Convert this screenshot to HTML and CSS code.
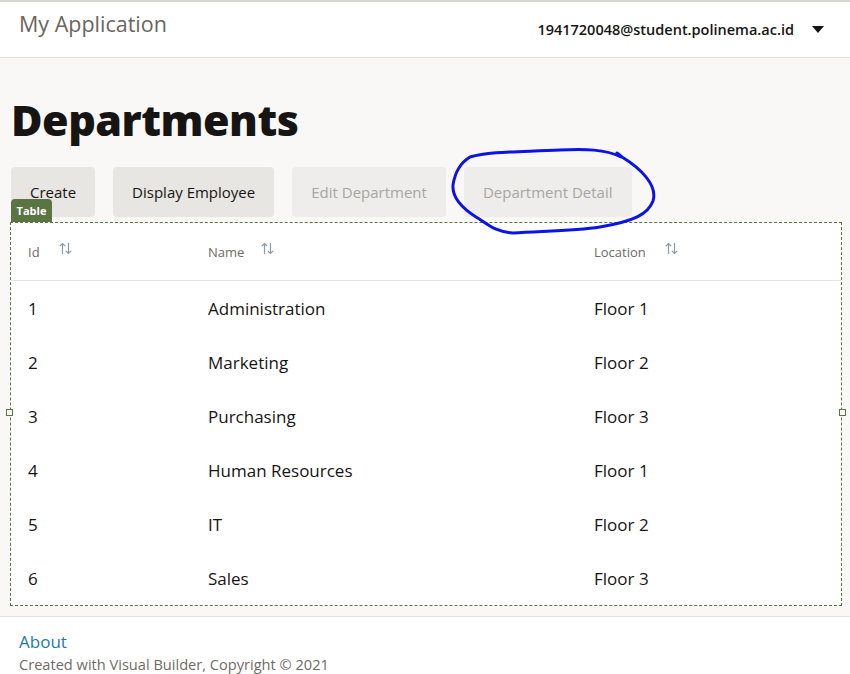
FILE: index.html
```html
<!DOCTYPE html>
<html>
<head>
<meta charset="utf-8">
<link rel="stylesheet" href="styles.css">
</head>
<body>
<header class="app-header">
  <div class="app-title">My Application</div>
  <div class="user-menu">
    <span class="user-email">1941720048@student.polinema.ac.id</span>
    <span class="caret"></span>
  </div>
</header>
<main class="page">
  <h1 class="page-title">Departments</h1>
  <div class="toolbar">
    <button class="btn">Create</button>
    <button class="btn">Display Employee</button>
    <button class="btn btn-disabled">Edit Department</button>
    <button class="btn btn-disabled">Department Detail</button>
  </div>
  <section class="table-wrap">
    <span class="table-tag">Table</span>
    <span class="handle handle-left"></span>
    <span class="handle handle-right"></span>
    <div class="row head">
      <div class="cell"><span>Id</span><svg class="sort" viewBox="0 0 13 13" width="13" height="13"><path d="M3.5 12V1.5M0.8 4.2L3.5 1.5L6.2 4.2M9.5 1V11.5M6.8 8.8L9.5 11.5L12.2 8.8" fill="none" stroke="#8e9aa6" stroke-width="1.2"/></svg></div>
      <div class="cell"><span>Name</span><svg class="sort" viewBox="0 0 13 13" width="13" height="13"><path d="M3.5 12V1.5M0.8 4.2L3.5 1.5L6.2 4.2M9.5 1V11.5M6.8 8.8L9.5 11.5L12.2 8.8" fill="none" stroke="#8e9aa6" stroke-width="1.2"/></svg></div>
      <div class="cell"><span>Location</span><svg class="sort" viewBox="0 0 13 13" width="13" height="13"><path d="M3.5 12V1.5M0.8 4.2L3.5 1.5L6.2 4.2M9.5 1V11.5M6.8 8.8L9.5 11.5L12.2 8.8" fill="none" stroke="#8e9aa6" stroke-width="1.2"/></svg></div>
    </div>
    <div class="row"><div class="cell">1</div><div class="cell">Administration</div><div class="cell">Floor 1</div></div>
    <div class="row"><div class="cell">2</div><div class="cell">Marketing</div><div class="cell">Floor 2</div></div>
    <div class="row"><div class="cell">3</div><div class="cell">Purchasing</div><div class="cell">Floor 3</div></div>
    <div class="row"><div class="cell">4</div><div class="cell">Human Resources</div><div class="cell">Floor 1</div></div>
    <div class="row"><div class="cell">5</div><div class="cell">IT</div><div class="cell">Floor 2</div></div>
    <div class="row"><div class="cell">6</div><div class="cell">Sales</div><div class="cell">Floor 3</div></div>
  </section>
</main>
<footer class="app-footer">
  <a class="about">About</a>
  <div class="copyright">Created with Visual Builder, Copyright © 2021</div>
</footer>
<svg class="annotation" width="850" height="674" viewBox="0 0 850 674">
  <path d="M617 153 L622 157 C640 168, 658 185, 653 201 C648 214, 635 221, 600 227 C575 231, 545 231, 513 233 C495 232, 488 224, 476 217 C462 208, 452 197, 453 185 C455 172, 460 163, 470 157 C490 151, 520 152, 560 150 C585 149, 605 149, 621 157" fill="none" stroke="#0a14e6" stroke-width="3" stroke-linecap="round" stroke-linejoin="round"/>
</svg>
</body>
</html>
```
FILE: styles.css
```css
html, body {
  margin: 0;
  padding: 0;
}
body {
  font-family: "Open Sans", "Noto Sans", sans-serif;
  color: #161513;
  background: #fff;
  width: 850px;
  height: 674px;
  overflow: hidden;
  position: relative;
}
.app-header {
  border-top: 2px solid #d9d5d1;
  border-bottom: 1px solid #e4e2df;
  height: 55px;
  box-sizing: content-box;
  display: flex;
  align-items: center;
  justify-content: space-between;
  padding: 0 26px 0 19px;
  background: #fff;
}
.app-title {
  font-size: 21.5px;
  color: #6b6560;
  margin-top: -12px;
}
.user-menu {
  display: flex;
  align-items: center;
  gap: 18px;
}
.user-email {
  font-size: 14.5px;
  font-weight: 600;
  color: #161513;
}
.caret {
  width: 0;
  height: 0;
  border-left: 6px solid transparent;
  border-right: 6px solid transparent;
  border-top: 7px solid #161513;
}
.page {
  background: #f9f8f6;
  padding: 1px 8px 10px 10px;
  border-bottom: 1px solid #e4e2df;
}
.page-title {
  margin: 31px 0 0 1px;
  font-size: 43px;
  font-weight: 800;
  line-height: 60px;
  letter-spacing: -0.5px;
}
.toolbar {
  display: flex;
  gap: 18px;
  margin: 17px 0 0 1px;
}
.btn {
  font-family: inherit;
  height: 50px;
  border: none;
  border-radius: 4px;
  background: #e8e6e3;
  color: #161513;
  font-size: 15px;
  padding: 0 19px;
}
.btn-disabled {
  background: #eeedeb;
  color: #a8a5a2;
}
.table-wrap {
  position: relative;
  margin-top: 5px;
  border: 1px dashed #5a7443;
  background: #fff;
}
.table-tag {
  position: absolute;
  left: 0;
  top: -24px;
  height: 23px;
  width: 41px;
  background: #5a7443;
  color: #fff;
  font-size: 11px;
  font-weight: 700;
  border-radius: 4px 4px 0 0;
  display: flex;
  align-items: center;
  justify-content: center;
}
.handle {
  position: absolute;
  top: 186px;
  width: 5px;
  height: 5px;
  border: 1px solid #5a7443;
  background: #fff;
}
.handle-left { left: -5px; }
.handle-right { right: -5px; }
.row {
  display: grid;
  grid-template-columns: 180px 386px 1fr;
  height: 54px;
  align-items: center;
  font-size: 17px;
}
.row .cell {
  padding-left: 17px;
}
.row.head {
  height: 57px;
  border-bottom: 1px solid #e4e4e4;
  font-size: 13px;
  color: #6f6b67;
}
.row.head .cell {
  display: flex;
  align-items: center;
  gap: 0;
}
.row.head .cell span:first-child {
  margin-right: 19px;
}
.row.head .cell:nth-child(2) span { margin-right: 17px; }
.row.head .cell:nth-child(3) span { margin-right: 19px; }
.sort {
  margin-top: -6px;
}
.app-footer {
  padding: 14px 19px 0;
}
.about {
  display: block;
  color: #227ba8;
  font-size: 17px;
  line-height: 22px;
}
.copyright {
  color: #6f6b67;
  font-size: 14.6px;
  line-height: 20px;
  margin-top: 1px;
}
.annotation {
  position: absolute;
  left: 0;
  top: 0;
  pointer-events: none;
}
```
